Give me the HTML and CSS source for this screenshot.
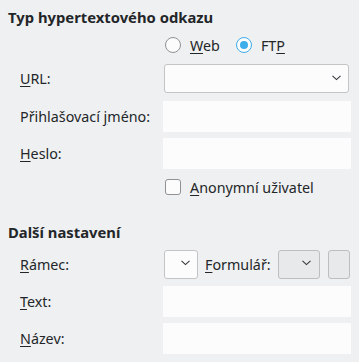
FILE: index.html
```html
<!DOCTYPE html>
<html lang="cs">
<head>
<meta charset="utf-8">
<link rel="stylesheet" href="styles.css">
</head>
<body>
<div class="dialog">
  <div class="section-title title-first">Typ hypertextového odkazu</div>

  <div class="row row-radio">
    <div class="label"></div>
    <div class="control radios">
      <span class="choice"><span class="radio-mark"></span><span class="choice-text"><u>W</u>eb</span></span>
      <span class="choice"><span class="radio-mark checked"></span><span class="choice-text">FT<u>P</u></span></span>
    </div>
  </div>

  <div class="row row-url">
    <div class="label"><u>U</u>RL:</div>
    <div class="control">
      <div class="combo combo-wide">
        <svg class="chev" width="9" height="6" viewBox="0 0 9 6"><polyline points="0.5,0.8 4.5,4.6 8.5,0.8" fill="none" stroke="#31363b" stroke-width="1.1"/></svg>
      </div>
    </div>
  </div>

  <div class="row row-input gap7">
    <div class="label">Přihlašovací <u>j</u>méno:</div>
    <div class="control"><div class="field"></div></div>
  </div>

  <div class="row row-input gap6">
    <div class="label"><u>H</u>eslo:</div>
    <div class="control"><div class="field"></div></div>
  </div>

  <div class="row row-check">
    <div class="label"></div>
    <div class="control radios">
      <span class="choice"><span class="check-mark"></span><span class="choice-text"><u>A</u>nonymní uživatel</span></span>
    </div>
  </div>

  <div class="section-title title-second">Další nastavení</div>

  <div class="row row-frame">
    <div class="label"><u>R</u>ámec:</div>
    <div class="control frame-controls">
      <div class="combo combo-small">
        <svg class="chev" width="9" height="6" viewBox="0 0 9 6"><polyline points="0.5,0.8 4.5,4.6 8.5,0.8" fill="none" stroke="#31363b" stroke-width="1.1"/></svg>
      </div>
      <span class="inline-label"><u>F</u>ormulář:</span>
      <div class="combo combo-disabled">
        <svg class="chev" width="9" height="6" viewBox="0 0 9 6"><polyline points="0.5,0.8 4.5,4.6 8.5,0.8" fill="none" stroke="#31363b" stroke-width="1.1"/></svg>
      </div>
      <div class="tool-button"></div>
    </div>
  </div>

  <div class="row row-input gap7">
    <div class="label"><u>T</u>ext:</div>
    <div class="control"><div class="field"></div></div>
  </div>

  <div class="row row-input gap6">
    <div class="label"><u>N</u>ázev:</div>
    <div class="control"><div class="field"></div></div>
  </div>
</div>
</body>
</html>
```

FILE: styles.css
```css
html, body {
  margin: 0;
  padding: 0;
  background: #eff0f1;
}

body {
  font-family: "Noto Sans", "Open Sans", sans-serif;
  font-size: 14.3px;
  color: #232629;
  width: 359px;
  height: 362px;
  overflow: hidden;
}

.dialog {
  padding: 7px 8px 0 8px;
}

u {
  text-decoration: underline;
  text-decoration-thickness: 1px;
  text-underline-offset: 2px;
}

.section-title {
  font-weight: bold;
  font-size: 14.8px;
  height: 20px;
  line-height: 20px;
}

.title-second {
  margin-top: 27px;
}

.row {
  display: flex;
  align-items: center;
  padding-left: 12px;
}

.label {
  width: 143px;
  flex: none;
  white-space: nowrap;
}

.control {
  width: 188px;
  flex: none;
  display: flex;
  align-items: center;
}

.row-radio {
  margin-top: 10px;
  height: 16px;
}

.radios {
  padding-left: 2px;
  gap: 10px;
}

.choice {
  display: inline-flex;
  align-items: center;
  gap: 9px;
  white-space: nowrap;
}

.choice + .choice {
  margin-left: 6px;
}

.radio-mark {
  width: 16px;
  height: 16px;
  box-sizing: border-box;
  border: 1px solid #8f9193;
  border-radius: 50%;
  background: #fcfcfc;
  flex: none;
  position: relative;
}

.radio-mark.checked {
  border-color: #3daee9;
}

.radio-mark.checked::after {
  content: "";
  position: absolute;
  left: 3px;
  top: 3px;
  width: 8px;
  height: 8px;
  border-radius: 50%;
  background: #3daee9;
}

.check-mark {
  width: 16px;
  height: 16px;
  box-sizing: border-box;
  border: 1px solid #8f9193;
  border-radius: 3px;
  background: #fcfcfc;
  flex: none;
}

.row-url {
  margin-top: 10px;
  height: 31px;
}

.combo {
  box-sizing: border-box;
  height: 29px;
  border: 1px solid #c2c4c6;
  border-radius: 3px;
  background: #fcfcfc;
  display: flex;
  align-items: center;
  justify-content: flex-end;
  padding-bottom: 2px;
  flex: none;
}

.combo-wide {
  width: 185px;
  margin-left: 1px;
  padding-right: 7px;
}

.chev {
  display: block;
}

.row-input {
  height: 31px;
}

.gap7 { margin-top: 7px; }
.gap6 { margin-top: 6px; }

.field {
  width: 188px;
  height: 31px;
  background: #fcfcfc;
}

.row-check {
  margin-top: 10px;
  height: 16px;
}

.row-frame {
  margin-top: 7px;
  height: 30px;
}

.frame-controls {
  padding-left: 1px;
}

.combo-small {
  width: 34px;
  padding-right: 7px;
}

.inline-label {
  width: 64px;
  flex: none;
  margin-left: 7px;
  white-space: nowrap;
}

.combo-disabled {
  width: 42px;
  margin-left: 9px;
  background: #e8e9ea;
  border-color: #bcbec0;
  padding-right: 8px;
}

.tool-button {
  box-sizing: border-box;
  width: 22px;
  height: 29px;
  margin-left: 8px;
  flex: none;
  border: 1px solid #bcbec0;
  border-radius: 3px;
  background: #e8e9ea;
}
```
